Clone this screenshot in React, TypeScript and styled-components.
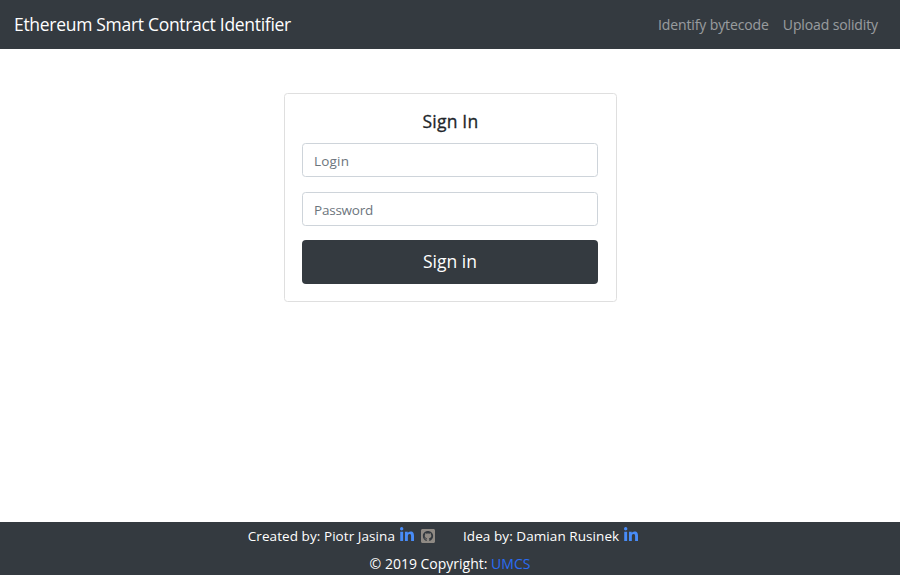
import React from "react";
import styled, { createGlobalStyle } from "styled-components";
import { FaLinkedinIn, FaGithubSquare } from "react-icons/fa";

const GlobalStyle = createGlobalStyle`
  *, *::before, *::after { box-sizing: border-box; }
  body {
    margin: 0;
    background: #fff;
    color: #212529;
    font-family: "Segoe UI", "Open Sans", "Noto Sans", sans-serif;
    font-size: 14px;
    line-height: 21px;
  }
  a { text-decoration: none; }
`;

const Page = styled.div`
  display: flex;
  flex-direction: column;
  height: 100vh;
  overflow: hidden;
`;

const Navbar = styled.nav`
  display: flex;
  align-items: center;
  justify-content: space-between;
  flex: none;
  height: 49px;
  padding: 0 22px 0 14px;
  background: #343a40;
`;

const Brand = styled.a`
  padding-bottom: 2px;
  color: #fff;
  font-size: 17.5px;
  letter-spacing: -0.3px;
  line-height: 26px;
  white-space: nowrap;
`;

const NavLinks = styled.div`
  display: flex;
  gap: 14px;
`;

const NavLink = styled.a`
  color: rgba(255, 255, 255, 0.5);
  letter-spacing: -0.12px;
  white-space: nowrap;
`;

const Main = styled.main`
  flex: 1;
  display: flex;
  justify-content: center;
  align-items: flex-start;
  padding-top: 44px;
`;

const Card = styled.form`
  display: flex;
  flex-direction: column;
  width: 333px;
  height: 209px;
  margin-left: 1px;
  padding: 17px;
  border: 1px solid #dfdfdf;
  border-radius: 3.5px;
`;

const Title = styled.h5`
  margin: 0 0 11px;
  height: 21px;
  font-size: 17.5px;
  font-weight: 500;
  letter-spacing: 0.2px;
  line-height: 21px;
  text-align: center;
  -webkit-text-stroke: 0.3px currentColor;
`;

const Input = styled.input<{ $spacing: number }>`
  height: 34px;
  width: 296px;
  margin: 0 0 15px;
  padding: 2px 11px 0;
  border: 1px solid #ced4da;
  border-radius: 3.5px;
  background: #fff;
  color: #495057;
  font: inherit;
  font-size: 13.5px;
  letter-spacing: ${(p) => p.$spacing}px;
  outline: none;
  &::placeholder { color: #6c757d; opacity: 1; }
  & + & { margin-bottom: 14px; }
`;

const Submit = styled.button`
  width: 296px;
  height: 44px;
  padding: 0 0 2px;
  border: 0;
  border-radius: 4px;
  background: #343a40;
  color: #fff;
  font: inherit;
  font-size: 17.5px;
`;

const Footer = styled.footer`
  display: flex;
  flex-direction: column;
  align-items: center;
  flex: none;
  height: 53px;
  padding-top: 4px;
  gap: 6px;
  background: #343a40;
  color: #fff;
`;

const Credits = styled.div`
  display: flex;
  gap: 27px;
  height: 21px;
  margin-right: 13px;
  font-size: 13.5px;
  letter-spacing: 0.07px;
`;

const Credit = styled.div`
  display: flex;
  white-space: nowrap;
`;

const IconLink = styled.a<{ $color: string; $gap: number }>`
  display: flex;
  margin: 1px 0 0 ${(p) => p.$gap}px;
  color: ${(p) => p.$color};
`;

const GithubLink = styled(IconLink)`
  margin-top: 2px;
`;

const Copyright = styled.div`
  white-space: nowrap;
  a { color: #2a6df4; }
`;

export default function App() {
  return (
    <Page>
      <GlobalStyle />
      <Navbar>
        <Brand>Ethereum Smart Contract Identifier</Brand>
        <NavLinks>
          <NavLink>Identify bytecode</NavLink>
          <NavLink>Upload solidity</NavLink>
        </NavLinks>
      </Navbar>
      <Main>
        <Card onSubmit={(e) => e.preventDefault()}>
          <Title>Sign In</Title>
          <Input type="text" placeholder="Login" $spacing={0.2} />
          <Input type="password" placeholder="Password" $spacing={-0.22} />
          <Submit type="submit">Sign in</Submit>
        </Card>
      </Main>
      <Footer>
        <Credits>
          <Credit>
            <span>Created by: Piotr Jasina</span>
            <IconLink $color="#488cf8" $gap={4}><FaLinkedinIn size={16} /></IconLink>
            <GithubLink $color="#8f8a84" $gap={5}><FaGithubSquare size={16} /></GithubLink>
          </Credit>
          <Credit>
            <span>Idea by: Damian Rusinek</span>
            <IconLink $color="#488cf8" $gap={4}><FaLinkedinIn size={16} /></IconLink>
          </Credit>
        </Credits>
        <Copyright>© 2019 Copyright: <a>UMCS</a></Copyright>
      </Footer>
    </Page>
  );
}
